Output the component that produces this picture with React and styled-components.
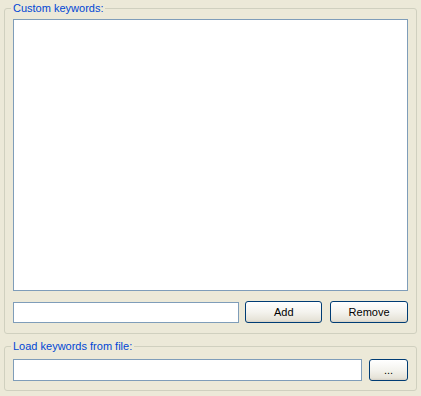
import React from 'react';
import styled, { createGlobalStyle } from 'styled-components';

const Global = createGlobalStyle`
  html, body {
    margin: 0;
    padding: 0;
    background: #ece9d8;
  }
  body {
    width: 421px;
    height: 396px;
    overflow: hidden;
    font-family: "Liberation Sans", Arial, sans-serif;
    font-size: 11px;
  }
`;

const Page = styled.div`
  display: flex;
  flex-direction: column;
  gap: 6px;
  padding: 2px 4px 0 4px;
`;

const Group = styled.fieldset`
  margin: 0;
  padding: 4px 8px ${p => p.$bottom || 8}px 8px;
  border: 1px solid #d0d0bf;
  border-radius: 3px;
  min-width: 0;
`;

const Legend = styled.legend`
  color: #0046d5;
  font-size: 11px;
  line-height: 13px;
  padding: 0 2px;
  margin-left: -2px;
`;

const ListBox = styled.div`
  height: 270px;
  background: #fff;
  border: 1px solid #7f9db9;
`;

const Row = styled.div`
  display: flex;
  align-items: center;
  gap: ${p => p.$gap || 6}px;
  margin-top: ${p => p.$top || 0}px;
`;

const TextBox = styled.input`
  box-sizing: border-box;
  width: ${p => p.$w}px;
  height: ${p => p.$h || 21}px;
  margin: 0;
  padding: 0 3px;
  border: 1px solid #7f9db9;
  background: #fff;
  font: inherit;
  outline: none;
`;

const Button = styled.button`
  box-sizing: border-box;
  width: ${p => p.$w}px;
  height: 22px;
  margin: 0;
  padding: 0;
  border: 1px solid #003c74;
  border-radius: 3px;
  background: linear-gradient(#ffffff 0%, #f4f3ee 50%, #e6e3d8 90%, #d6d0c5 100%);
  color: #000;
  font: inherit;
  font-size: 11px;
  cursor: pointer;
`;

export default function App() {
  return (
    <>
      <Global />
      <Page>
        <Group $bottom={10}>
          <Legend>Custom keywords:</Legend>
          <ListBox />
          <Row $top={10} $gap={6}>
            <TextBox $w={227} />
            <Button $w={77}>Add</Button>
            <Button $w={78} style={{ marginLeft: 2 }}>Remove</Button>
          </Row>
        </Group>
        <Group $bottom={9}>
          <Legend>Load keywords from file:</Legend>
          <Row $top={2} $gap={7}>
            <TextBox $w={350} $h={22} />
            <Button $w={39}>...</Button>
          </Row>
        </Group>
      </Page>
    </>
  );
}
